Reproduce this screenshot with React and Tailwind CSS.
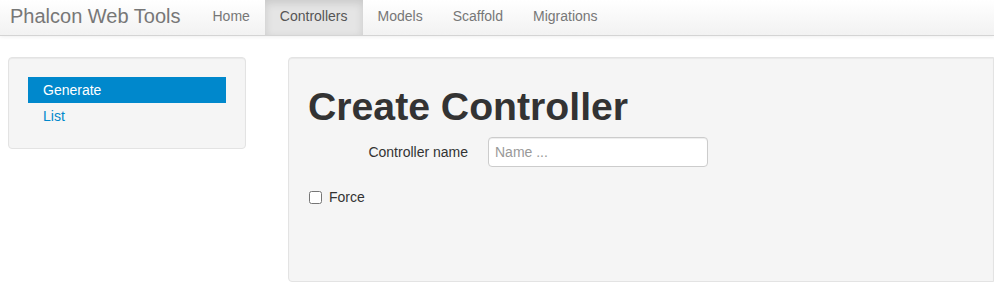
import React, { useState } from 'react';

const navItems = ['Home', 'Controllers', 'Models', 'Scaffold', 'Migrations'];

const Navbar = () => (
  <div className="h-[36px] flex items-stretch bg-gradient-to-b from-white to-[#f2f2f2] border-b border-[#d4d4d4] shadow-[0_1px_4px_rgba(0,0,0,0.065)]">
    <a className="pl-[10px] pr-[17px] pb-[3px] flex items-center text-[20px] text-[#777] leading-none">Phalcon Web Tools</a>
    <ul className="flex items-stretch">
      {navItems.map((item) => (
        <li key={item} className="flex">
          <a
            className={`px-[15px] pb-[3px] flex items-center text-[14px] ${
              item === 'Controllers'
                ? 'bg-[#e5e5e5] text-[#555] shadow-[inset_0_3px_8px_rgba(0,0,0,0.125)]'
                : 'text-[#777]'
            }`}
          >
            {item}
          </a>
        </li>
      ))}
    </ul>
  </div>
);

const Well = ({ className, children }) => (
  <div
    className={`bg-[#f5f5f5] border border-[#e3e3e3] rounded-[4px] shadow-[inset_0_1px_1px_rgba(0,0,0,0.05)] p-[19px] ${className}`}
  >
    {children}
  </div>
);

const App = () => {
  const [name, setName] = useState('');
  const [force, setForce] = useState(false);

  return (
    <div className="min-h-[303px] bg-white text-[#333] text-[14px] leading-[20px] font-['Liberation_Sans',Arial,sans-serif]">
      <Navbar />
      <div className="flex items-start pt-[21px] pl-[8px]">
        <Well className="w-[238px] shrink-0">
          <ul>
            <li>
              <a className="block h-[26px] leading-[26px] px-[15px] bg-[#0088cc] text-white">Generate</a>
            </li>
            <li>
              <a className="block h-[26px] leading-[26px] px-[15px] text-[#0088cc]">List</a>
            </li>
          </ul>
        </Well>
        <Well className="ml-[42px] flex-1 h-[225px] rounded-r-none">
          <h1 className="mt-[10px] mb-[10px] text-[39.2px] leading-[40px] font-bold text-[#333]">Create Controller</h1>
          <div className="flex items-center mb-[20px]">
            <label className="w-[160px] text-right">Controller name</label>
            <input
              value={name}
              onChange={(e) => setName(e.target.value)}
              placeholder="Name ..."
              className="ml-[20px] w-[220px] h-[30px] px-[6px] bg-white border border-[#ccc] rounded-[4px] shadow-[inset_0_1px_1px_rgba(0,0,0,0.075)] text-[14px] text-[#555] placeholder:text-[#999] outline-none"
            />
          </div>
          <label className="flex items-center gap-[7px]">
            <input
              type="checkbox"
              checked={force}
              onChange={(e) => setForce(e.target.checked)}
              className="w-[13px] h-[13px] ml-[1px]"
            />
            <span>Force</span>
          </label>
        </Well>
      </div>
    </div>
  );
};

export default App;
